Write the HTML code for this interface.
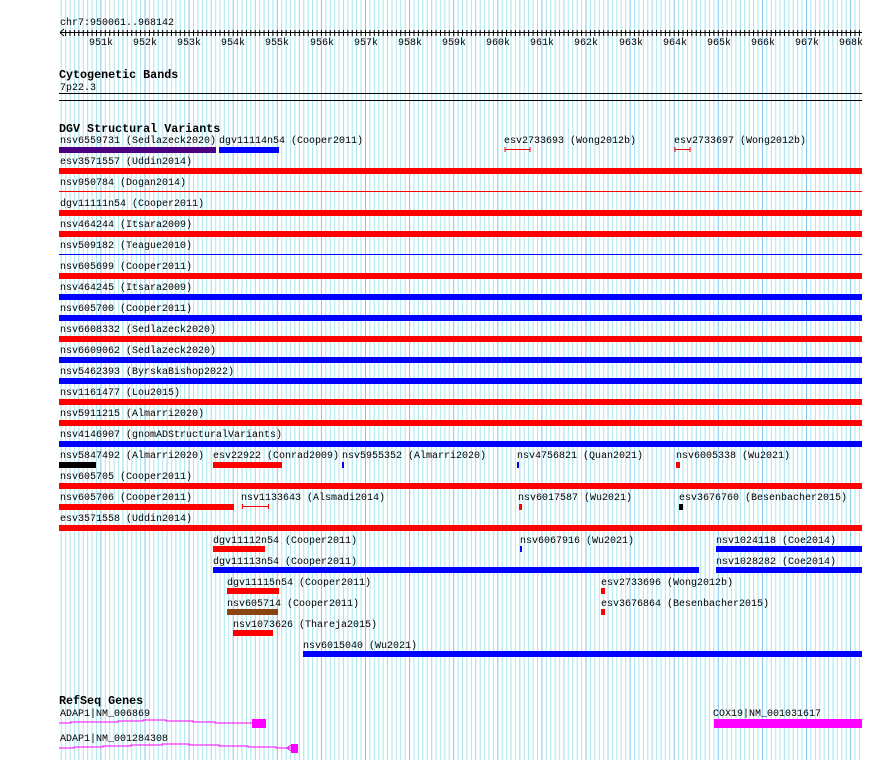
<!DOCTYPE html>
<html><head><meta charset="utf-8"><style>
html,body{margin:0;padding:0;background:#fff;width:890px;height:760px;overflow:hidden}
svg{display:block}
text{font-family:"Liberation Mono","DejaVu Sans Mono",monospace;font-size:10px;fill:#000}
.t{font-weight:bold;font-size:11.7px}
</style></head><body>
<svg width="890" height="760" xmlns="http://www.w3.org/2000/svg">
<defs>
<pattern id="g" patternUnits="userSpaceOnUse" x="100.4" y="0" width="44.1" height="10">
<rect x="4.41" width="1" height="10" fill="#a6e6ee"/>
<rect x="8.82" width="1" height="10" fill="#a6e6ee"/>
<rect x="13.23" width="1" height="10" fill="#a6e6ee"/>
<rect x="17.64" width="1" height="10" fill="#a6e6ee"/>
<rect x="22.05" width="1" height="10" fill="#9cd8ee"/>
<rect x="26.46" width="1" height="10" fill="#a6e6ee"/>
<rect x="30.87" width="1" height="10" fill="#a6e6ee"/>
<rect x="35.28" width="1" height="10" fill="#a6e6ee"/>
<rect x="39.69" width="1" height="10" fill="#a6e6ee"/>
<rect x="0" width="1" height="10" fill="#84c4ee"/>
</pattern>
<pattern id="tk" patternUnits="userSpaceOnUse" x="100.4" y="0" width="4.41" height="40"><rect x="0" y="30" width="1" height="6" fill="#000"/></pattern>
</defs>
<rect x="59" y="0" width="803" height="760" fill="url(#g)"/>

<!-- ruler -->
<text x="60" y="25">chr7:950061..968142</text>
<line x1="60" y1="32.5" x2="862" y2="32.5" stroke="#000"/>
<path d="M60 32.5 L64 29 M60 32.5 L64 36" stroke="#000" fill="none"/>
<rect x="64" y="29" width="798" height="8" fill="url(#tk)"/>
<g text-anchor="middle">
<text x="101" y="45">951k</text><text x="145" y="45">952k</text><text x="189" y="45">953k</text><text x="233" y="45">954k</text><text x="277" y="45">955k</text><text x="322" y="45">956k</text><text x="366" y="45">957k</text><text x="410" y="45">958k</text><text x="454" y="45">959k</text><text x="498" y="45">960k</text><text x="542" y="45">961k</text><text x="586" y="45">962k</text><text x="631" y="45">963k</text><text x="675" y="45">964k</text><text x="719" y="45">965k</text><text x="763" y="45">966k</text><text x="807" y="45">967k</text><text x="851" y="45">968k</text>
</g>

<text class="t" x="59" y="78">Cytogenetic Bands</text>
<text x="60" y="90">7p22.3</text>
<rect x="59" y="93" width="803" height="1" fill="#000"/>
<rect x="59" y="100" width="803" height="1" fill="#000"/>

<text class="t" x="59" y="132">DGV Structural Variants</text>

<text x="60" y="143">nsv6559731 (Sedlazeck2020)</text>
<text x="219" y="143">dgv11114n54 (Cooper2011)</text>
<text x="504" y="143">esv2733693 (Wong2012b)</text>
<text x="674" y="143">esv2733697 (Wong2012b)</text>
<rect x="59" y="147" width="157" height="6" fill="#4b0082"/>
<rect x="219" y="147" width="60" height="6" fill="#0000ff"/>
<path d="M505 147v5M530 147v5M505 149.5H530M675 147v5M690 147v5M675 149.5H690" stroke="#f00" fill="none"/>

<g>
<text x="60" y="164">esv3571557 (Uddin2014)</text><rect x="59" y="168" width="803" height="6" fill="#f00"/>
<text x="60" y="185">nsv950784 (Dogan2014)</text><rect x="59" y="191" width="803" height="1" fill="#f00"/>
<text x="60" y="206">dgv11111n54 (Cooper2011)</text><rect x="59" y="210" width="803" height="6" fill="#f00"/>
<text x="60" y="227">nsv464244 (Itsara2009)</text><rect x="59" y="231" width="803" height="6" fill="#f00"/>
<text x="60" y="248">nsv509182 (Teague2010)</text><rect x="59" y="254" width="803" height="1" fill="#00f"/>
<text x="60" y="269">nsv605699 (Cooper2011)</text><rect x="59" y="273" width="803" height="6" fill="#f00"/>
<text x="60" y="290">nsv464245 (Itsara2009)</text><rect x="59" y="294" width="803" height="6" fill="#00f"/>
<text x="60" y="311">nsv605700 (Cooper2011)</text><rect x="59" y="315" width="803" height="6" fill="#00f"/>
<text x="60" y="332">nsv6608332 (Sedlazeck2020)</text><rect x="59" y="336" width="803" height="6" fill="#f00"/>
<text x="60" y="353">nsv6609062 (Sedlazeck2020)</text><rect x="59" y="357" width="803" height="6" fill="#00f"/>
<text x="60" y="374">nsv5462393 (ByrskaBishop2022)</text><rect x="59" y="378" width="803" height="6" fill="#00f"/>
<text x="60" y="395">nsv1161477 (Lou2015)</text><rect x="59" y="399" width="803" height="6" fill="#f00"/>
<text x="60" y="416">nsv5911215 (Almarri2020)</text><rect x="59" y="420" width="803" height="6" fill="#f00"/>
<text x="60" y="437">nsv4146907 (gnomADStructuralVariants)</text><rect x="59" y="441" width="803" height="6" fill="#00f"/>
</g>

<text x="60" y="458">nsv5847492 (Almarri2020)</text>
<text x="213" y="458">esv22922 (Conrad2009)</text>
<text x="342" y="458">nsv5955352 (Almarri2020)</text>
<text x="517" y="458">nsv4756821 (Quan2021)</text>
<text x="676" y="458">nsv6005338 (Wu2021)</text>
<rect x="59" y="462" width="37" height="6" fill="#000"/>
<rect x="213" y="462" width="69" height="6" fill="#f00"/>
<rect x="342" y="462" width="2" height="6" fill="#00f"/>
<rect x="517" y="462" width="2" height="6" fill="#00f"/>
<rect x="676" y="462" width="4" height="6" fill="#f00"/>

<text x="60" y="479">nsv605705 (Cooper2011)</text><rect x="59" y="483" width="803" height="6" fill="#f00"/>

<text x="60" y="500">nsv605706 (Cooper2011)</text>
<text x="241" y="500">nsv1133643 (Alsmadi2014)</text>
<text x="518" y="500">nsv6017587 (Wu2021)</text>
<text x="679" y="500">esv3676760 (Besenbacher2015)</text>
<rect x="59" y="504" width="175" height="6" fill="#f00"/>
<path d="M242.5 504v5M268.5 504v5M242 506.5H269" stroke="#f00" fill="none"/>
<rect x="519" y="504" width="3" height="6" fill="#f00"/>
<rect x="679" y="504" width="4" height="6" fill="#000"/>

<text x="60" y="521">esv3571558 (Uddin2014)</text><rect x="59" y="525" width="803" height="6" fill="#f00"/>

<text x="213" y="543">dgv11112n54 (Cooper2011)</text>
<text x="520" y="543">nsv6067916 (Wu2021)</text>
<text x="716" y="543">nsv1024118 (Coe2014)</text>
<rect x="213" y="546" width="52" height="6" fill="#f00"/>
<rect x="520" y="546" width="2" height="6" fill="#00f"/>
<rect x="716" y="546" width="146" height="6" fill="#00f"/>

<text x="213" y="564">dgv11113n54 (Cooper2011)</text>
<text x="716" y="564">nsv1028282 (Coe2014)</text>
<rect x="213" y="567" width="486" height="6" fill="#00f"/>
<rect x="716" y="567" width="146" height="6" fill="#00f"/>

<text x="227" y="585">dgv11115n54 (Cooper2011)</text>
<text x="601" y="585">esv2733696 (Wong2012b)</text>
<rect x="227" y="588" width="52" height="6" fill="#f00"/>
<rect x="601" y="588" width="4" height="6" fill="#f00"/>

<text x="227" y="606">nsv605714 (Cooper2011)</text>
<text x="601" y="606">esv3676864 (Besenbacher2015)</text>
<rect x="227" y="609" width="51" height="6" fill="#8b4513"/>
<rect x="601" y="609" width="4" height="6" fill="#f00"/>

<text x="233" y="627">nsv1073626 (Thareja2015)</text>
<rect x="233" y="630" width="40" height="6" fill="#f00"/>

<text x="303" y="648">nsv6015040 (Wu2021)</text>
<rect x="303" y="651" width="559" height="6" fill="#00f"/>

<text class="t" x="59" y="704">RefSeq Genes</text>
<text x="60" y="716">ADAP1|NM_006869</text>
<polyline points="59,723 71,723 71,722 118,722 118,721 143,721 143,720 166,720 166,721 193,721 193,722 215,722 215,723 241,723 252,723" stroke="#f0f" fill="none"/>
<rect x="252" y="719" width="14" height="9" fill="#f0f"/>
<text x="713" y="716">COX19|NM_001031617</text>
<rect x="714" y="719" width="148" height="9" fill="#f0f"/>

<text x="60" y="741">ADAP1|NM_001284308</text>
<polyline points="59,748 74,748 74,747 103,747 103,746 131,746 131,745 162,745 162,744 189,744 189,745 219,745 219,746 248,746 248,747 276,747 276,748 291,748" stroke="#f0f" fill="none"/>
<path d="M291 745 L287 748 L291 751" stroke="#f0f" fill="none"/>
<rect x="291" y="744" width="7" height="9" fill="#f0f"/>
</svg>
</body></html>
